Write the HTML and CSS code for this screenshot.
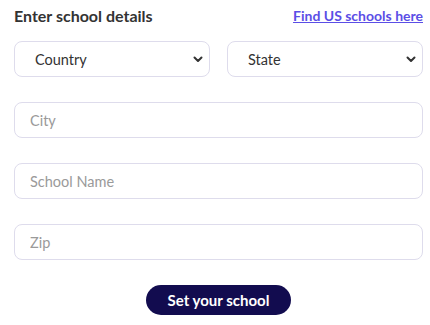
FILE: index.html
```html
<!DOCTYPE html>
<html lang="en">
<head>
    <meta charset="UTF-8">
    <meta name="viewport" content="width=device-width, initial-scale=1.0">
    <title>School details</title>
    <link rel="stylesheet" href="styles.css">
</head>
<body>
    <form class="school-form">
        <div class="form-header">
            <h3>Enter school details</h3>
            <a href="#" class="find-link">Find US schools here</a>
        </div>

        <div class="select-row">
            <div class="select-wrap">
                <select>
                    <option>Country</option>
                </select>
                <svg class="chevron" width="10" height="7" viewBox="0 0 10 7"><path d="M1.5 1.5 L5 5 L8.5 1.5" fill="none" stroke="#333" stroke-width="2" stroke-linecap="round" stroke-linejoin="round"/></svg>
            </div>
            <div class="select-wrap">
                <select>
                    <option>State</option>
                </select>
                <svg class="chevron" width="10" height="7" viewBox="0 0 10 7"><path d="M1.5 1.5 L5 5 L8.5 1.5" fill="none" stroke="#333" stroke-width="2" stroke-linecap="round" stroke-linejoin="round"/></svg>
            </div>
        </div>

        <input type="text" placeholder="City">
        <input type="text" placeholder="School Name">
        <input type="text" placeholder="Zip">

        <div class="submit-row">
            <button type="button">Set your school</button>
        </div>
    </form>
</body>
</html>
```

FILE: styles.css
```css
body {
    margin: 0;
    padding: 6px 7px 0 14px;
    font-family: Lato, "Noto Sans", sans-serif;
    background-color: white;
    color: #333;
}

.school-form {
    display: flex;
    flex-direction: column;
    gap: 25px;
}

.form-header {
    display: flex;
    justify-content: space-between;
    align-items: center;
    margin-bottom: -9px;
}

.form-header h3 {
    margin: 0;
    font-size: 16px;
    font-weight: 700;
    color: #333;
}

.find-link {
    font-size: 14px;
    font-weight: 700;
    color: #5b4ee6;
}

.select-row {
    display: grid;
    grid-template-columns: 1fr 1fr;
    gap: 17px;
}

.select-wrap {
    position: relative;
}

.select-wrap select {
    appearance: none;
    width: 100%;
    height: 36px;
    padding: 0 20px;
    border: 1px solid #dedcec;
    border-radius: 8px;
    background: white;
    font-family: inherit;
    font-size: 14.5px;
    color: #333;
}

.chevron {
    position: absolute;
    right: 7px;
    top: 15px;
    pointer-events: none;
}

.school-form input {
    box-sizing: border-box;
    width: 100%;
    height: 36px;
    padding: 0 15px;
    border: 1px solid #dedcec;
    border-radius: 8px;
    font-family: inherit;
    font-size: 14.5px;
    color: #333;
}

.school-form input::placeholder {
    color: #9a9a9a;
}

.submit-row {
    text-align: center;
}

.submit-row button {
    height: 30px;
    padding: 0 22px;
    border: none;
    border-radius: 15px;
    background-color: #120c4f;
    color: white;
    font-family: inherit;
    font-size: 15px;
    font-weight: 700;
    cursor: pointer;
}
```
